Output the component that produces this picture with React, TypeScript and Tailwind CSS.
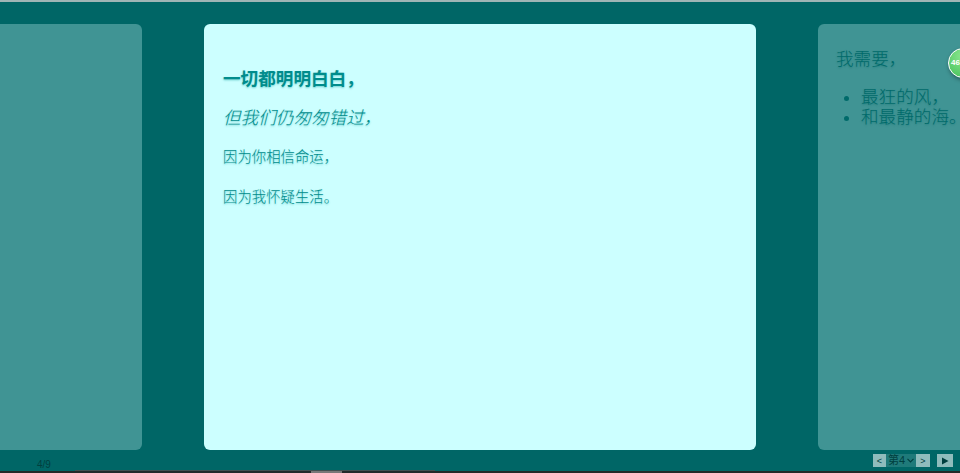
const cjk = 'font-["Liberation_Sans","Noto_Sans_CJK_SC",sans-serif]'

const Slide = ({ active, children }: { active?: boolean; children?: React.ReactNode }) => (
  <section
    className={`h-[426px] w-[552px] shrink-0 rounded-[6px] ${
      active ? 'bg-[#ccffff] px-[19px] text-[#008c8c]' : 'bg-[#409494] px-[18px] text-[#006a6a]'
    }`}
  >
    {children}
  </section>
)

function App() {
  return (
    <div className={`relative flex h-[473px] w-[960px] flex-col overflow-hidden bg-[#006666] ${cjk}`}>
      <div className="h-[2px] shrink-0 bg-[#9fb5b5]" />

      <div className="flex flex-1 justify-center gap-[62px] pt-[22px]">
        <Slide />
        <Slide active>
          <div className="pt-[42px] font-light [text-shadow:0_1px_2px_rgba(0,153,153,0.45)]">
            <p className="text-[17.6px] leading-[26px] font-bold">一切都明明白白，</p>
            <p className="mt-[13px] text-[17.6px] leading-[26px] italic">但我们仍匆匆错过，</p>
            <p className="mt-[15px] text-[14.4px] leading-[22px]">因为你相信命运，</p>
            <p className="mt-[18px] text-[14.4px] leading-[22px]">因为我怀疑生活。</p>
          </div>
        </Slide>
        <Slide>
          <div className="pt-[22px] text-[17.6px] font-light [text-shadow:0_1px_2px_rgba(0,102,102,0.4)]">
            <p className="leading-[26px]">我需要，</p>
            <ul className="mt-[15px] list-disc pl-[25px] leading-[20px]">
              <li>最狂的风，</li>
              <li>和最静的海。</li>
            </ul>
          </div>
        </Slide>
      </div>

      {/* pager */}
      <div className="absolute right-[7px] bottom-[6px] flex items-center text-[11px] text-[#003f3f]">
        <button type="button" className="h-[13px] w-[13px] bg-[#8fbcbc] text-center text-[9px] leading-[12px]">&lt;</button>
        <span className="flex h-[13px] w-[30px] items-center justify-center gap-[2px] bg-[#1f7a7a] leading-[13px]">
          第4
          <svg width="7" height="5" viewBox="0 0 7 5" fill="none" stroke="#003f3f" strokeWidth="1.2">
            <path d="M0.5 0.8 3.5 3.8 6.5 0.8" />
          </svg>
        </span>
        <button type="button" className="h-[13px] w-[14px] bg-[#8fbcbc] text-center text-[9px] leading-[12px]">&gt;</button>
        <button type="button" className="ml-[7px] flex h-[13px] w-[16px] items-center justify-center bg-[#8fbcbc]">
          <svg width="8" height="8" viewBox="0 0 8 8" fill="#003f3f">
            <path d="M1 0.5 7.5 4 1 7.5Z" />
          </svg>
        </button>
      </div>

      {/* page count */}
      <span className="absolute bottom-[3px] left-[37px] text-[10px] leading-[10px] text-[#003f3f]">4/9</span>

      {/* progress */}
      <div className="absolute bottom-[2px] left-[75px] h-[1px] w-[360px] bg-[#3f5050]" />
      <div className="absolute right-0 bottom-0 left-0 h-[2px] bg-[#232a2a]">
        <div className="absolute top-0 bottom-0 left-[311px] w-[31px] bg-[#777777]" />
      </div>

      {/* floating badge */}
      <div className="absolute top-[48px] left-[948px] flex h-[30px] w-[30px] items-center justify-start rounded-full border-[1.5px] border-white bg-[radial-gradient(circle_at_50%_25%,#8be88f,#45c05a)] pl-[2px] shadow-[1px_2px_4px_rgba(0,0,0,0.4)]">
        <span className="text-[8px] font-bold text-white">46</span>
      </div>
    </div>
  )
}

export default App
